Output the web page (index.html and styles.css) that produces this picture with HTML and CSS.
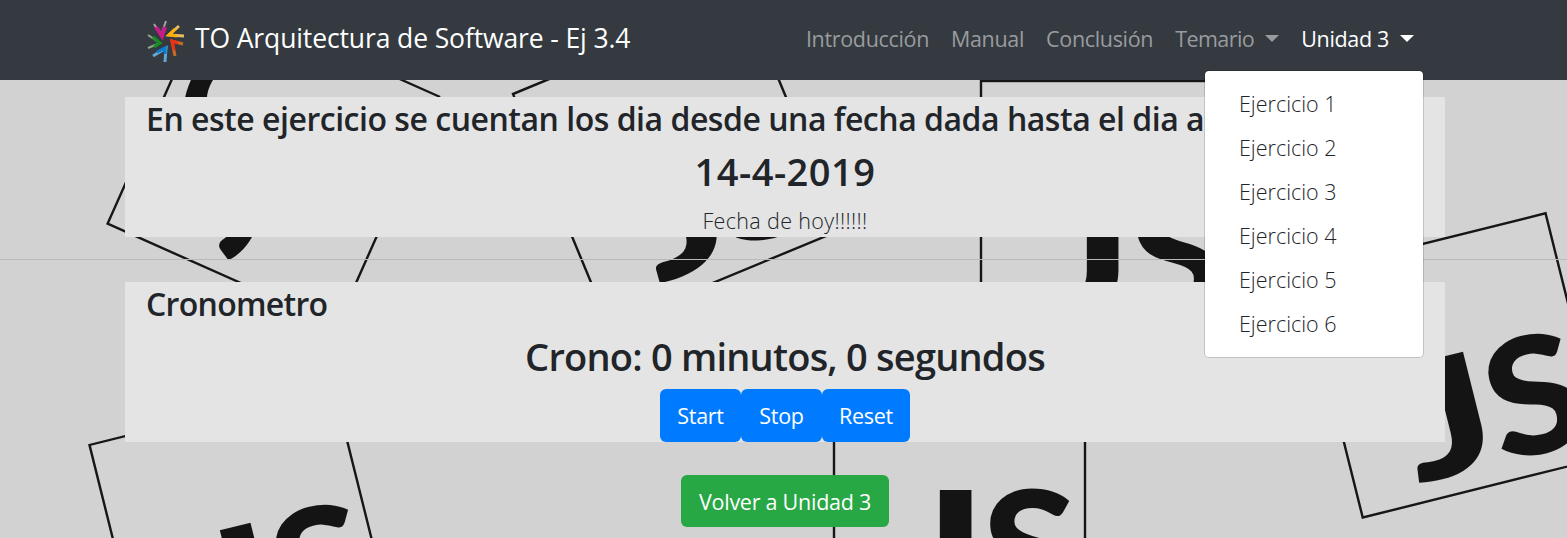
FILE: index.html
```html
<!DOCTYPE html>
<html lang="es">
<head>
<meta charset="utf-8">
<title>TO Arquitectura de Software - Ej 3.4</title>
<link rel="stylesheet" href="styles.css">
</head>
<body>
<svg class="backdrop" width="1567" height="538" viewBox="0 0 1567 538" aria-hidden="true">
  <defs>
    <g id="tile">
      <rect class="tile-frame" x="0" y="0" width="251" height="251"/>
      <text class="tile-letter" x="61" y="232" textLength="91" lengthAdjust="spacingAndGlyphs">J</text>
      <text class="tile-letter" x="148" y="232" textLength="95" lengthAdjust="spacingAndGlyphs">S</text>
    </g>
  </defs>
  <use href="#tile" transform="translate(439 96.500) rotate(114)"/>
  <use href="#tile" transform="translate(513 94) rotate(-22.5)"/>
  <use href="#tile" transform="translate(981 81)"/>
  <use href="#tile" transform="translate(89.500 445) rotate(-14)"/>
  <use href="#tile" transform="translate(834 376)"/>
  <use href="#tile" transform="translate(1302 274) rotate(-14)"/>
</svg>
<nav class="navbar">
  <div class="navbar-inner">
    <a class="brand">
      <svg class="brand-logo" width="41" height="46" viewBox="0 0 41 46" fill="none" aria-hidden="true">
        <path d="M8 6l7 11 5-14" stroke="#a8a0aa" stroke-width="2"/>
        <path d="M10 9l6 9 3-9" stroke="#c41c86" stroke-width="4"/>
        <path d="M33 8l-10 9 15 1" stroke="#e7bb62" stroke-width="3"/>
        <path d="M29 11l-6 6 8 1" stroke="#ffb000" stroke-width="3"/>
        <path d="M37 26l-11-3 3 15" stroke="#c96a24" stroke-width="3"/>
        <path d="M32 25l-6-2 2 9" stroke="#ed2f16" stroke-width="3"/>
        <path d="M7 38l13-8-1 14" stroke="#64a8d2" stroke-width="3"/>
        <path d="M11 34l8-4v6" stroke="#087bd0" stroke-width="3"/>
        <path d="M2 17l12 8-12 5" stroke="#8fa98a" stroke-width="2"/>
        <path d="M7 19l7 6-6 4" stroke="#168d25" stroke-width="3"/>
      </svg>
      <span class="brand-text">TO Arquitectura de Software - Ej 3.4</span>
    </a>
    <div class="nav">
      <a class="nav-link intro">Introducción</a>
      <a class="nav-link manual">Manual</a>
      <a class="nav-link conclusion">Conclusión</a>
      <a class="nav-link temario"><span>Temario</span><i class="caret"></i></a>
      <div class="dropdown">
        <a class="nav-link unidad active"><span>Unidad 3</span><i class="caret"></i></a>
        <div class="dropdown-menu">
          <a class="dropdown-item">Ejercicio 1</a>
          <a class="dropdown-item">Ejercicio 2</a>
          <a class="dropdown-item">Ejercicio 3</a>
          <a class="dropdown-item">Ejercicio 4</a>
          <a class="dropdown-item">Ejercicio 5</a>
          <a class="dropdown-item">Ejercicio 6</a>
        </div>
      </div>
    </div>
  </div>
</nav>
<main>
  <section class="panel">
    <h3 class="heading question">En este ejercicio se cuentan los dia desde una fecha dada hasta el dia actual</h3>
    <h2 class="value date">14-4-2019</h2>
    <p class="note"><span>Fecha de hoy!!!!!!</span></p>
  </section>
  <hr class="divider">
  <section class="panel">
    <h3 class="heading timer">Cronometro</h3>
    <h2 class="value crono">Crono: 0 minutos, 0 segundos</h2>
    <div class="actions">
      <button class="btn start">Start</button>
      <button class="btn stop">Stop</button>
      <button class="btn reset">Reset</button>
    </div>
  </section>
  <div class="back"><button class="btn btn-success">Volver a Unidad 3</button></div>
</main>
</body>
</html>
```
FILE: styles.css
```css
* { box-sizing: border-box; }
body {
  margin: 0;
  height: 538px;
  overflow: hidden;
  background: #d2d2d2;
  color: #212529;
  font: 400 21.5px/33px "Open Sans", "Noto Sans", sans-serif;
}
.backdrop { position: absolute; top: 0; left: 0; z-index: -1; }
.tile-frame { fill: #d3d3d3; stroke: #161616; stroke-width: 2.4; }
.tile-letter {
  font: 900 162px Lato, sans-serif;
  fill: #141414;
}
.navbar { height: 80px; background: #343a40; }
.navbar-inner {
  display: flex;
  justify-content: space-between;
  align-items: center;
  width: 1320px;
  height: 76px;
  margin-left: 125px;
  padding: 0 20px 0 21px;
}
.brand { display: flex; align-items: center; gap: 8px; color: #fff; }
.brand-logo { margin-top: 5px; }
.brand-text { font-size: 26.5px; letter-spacing: -0.12px; white-space: nowrap; }
.nav { display: flex; }
.nav-link {
  display: flex;
  align-items: center;
  padding: 0 11px;
  color: #999c9f;
  white-space: nowrap;
  letter-spacing: -0.33px;
}
.temario { letter-spacing: -0.55px; }
.active { color: #fff; }
.caret {
  margin-left: 11px;
  border: 7px solid transparent;
  border-top-color: currentColor;
  border-bottom: 0;
}
.dropdown { position: relative; }
.dropdown-menu {
  position: absolute;
  top: 48px;
  right: 1px;
  z-index: 5;
  width: 220px;
  height: 288px;
  padding: 11px 0;
  background: #fff;
  background-clip: padding-box;
  border: 1px solid rgba(0, 0, 0, 0.15);
  border-radius: 5px;
}
.dropdown-item {
  display: block;
  height: 44px;
  padding: 5px 34px;
  color: #212529;
  font-weight: 360;
  letter-spacing: 0;
}
.panel {
  width: 1320px;
  margin-left: 125px;
  background: #e4e4e4;
}
main { padding-top: 17px; }
.heading {
  height: 46px;
  margin: 0;
  padding: 0 21px;
  font-size: 32px;
  line-height: 43px;
  font-weight: 600;
  white-space: nowrap;
}
.question { letter-spacing: -0.48px; }
.timer { letter-spacing: -0.7px; }
.value {
  height: 61px;
  margin: 0;
  text-align: center;
  font-size: 38px;
  line-height: 57px;
  font-weight: 600;
}
.date { letter-spacing: 0.5px; }
.crono { letter-spacing: -0.78px; }
.note {
  height: 33px;
  margin: 0;
  text-align: center;
  font-weight: 360;
  letter-spacing: 0.35px;
}
.divider { height: 1px; margin: 22px 0; border: 0; background: #bababa; }
.actions { display: flex; justify-content: center; height: 53px; }
.btn {
  height: 53px;
  padding: 0;
  border: 0;
  border-radius: 6px;
  background: #007bff;
  color: #fff;
  font: inherit;
  letter-spacing: -0.25px;
}
.start, .stop { width: 81px; }
.reset { width: 88px; }
.back { display: flex; justify-content: center; width: 1320px; margin: 33px 0 0 125px; }
.btn-success { width: 208px; height: 52px; background: #28a745; }
```
